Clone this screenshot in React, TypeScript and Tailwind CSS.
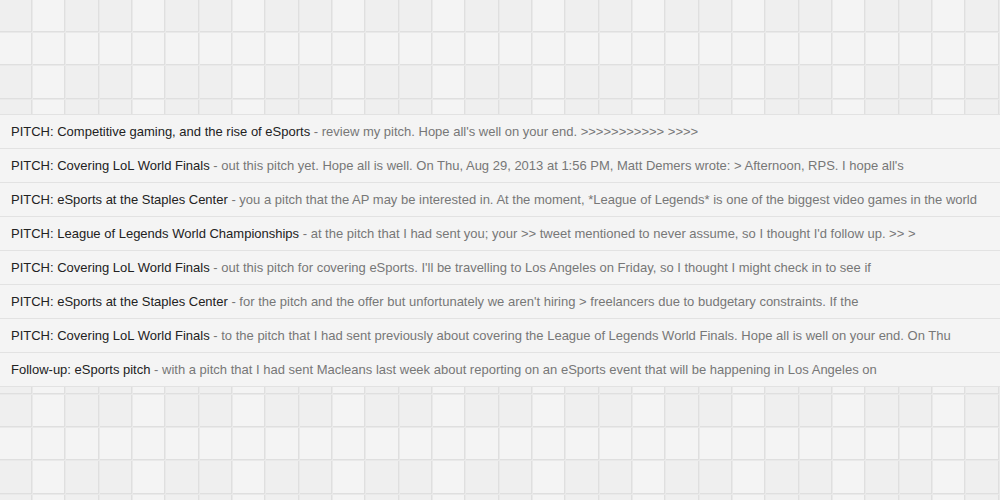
import React from "react";

const rows: [string, string][] = [
  ["PITCH: Competitive gaming, and the rise of eSports", "review my pitch. Hope all's well on your end. >>>>>>>>>>> >>>>"],
  ["PITCH: Covering LoL World Finals", "out this pitch yet. Hope all is well. On Thu, Aug 29, 2013 at 1:56 PM, Matt Demers wrote: > Afternoon, RPS. I hope all's"],
  ["PITCH: eSports at the Staples Center", "you a pitch that the AP may be interested in. At the moment, *League of Legends* is one of the biggest video games in the world"],
  ["PITCH: League of Legends World Championships", "at the pitch that I had sent you; your >> tweet mentioned to never assume, so I thought I'd follow up. >> >"],
  ["PITCH: Covering LoL World Finals", "out this pitch for covering eSports. I'll be travelling to Los Angeles on Friday, so I thought I might check in to see if"],
  ["PITCH: eSports at the Staples Center", "for the pitch and the offer but unfortunately we aren't hiring > freelancers due to budgetary constraints. If the"],
  ["PITCH: Covering LoL World Finals", "to the pitch that I had sent previously about covering the League of Legends World Finals. Hope all is well on your end. On Thu"],
  ["Follow-up: eSports pitch", "with a pitch that I had sent Macleans last week about reporting on an eSports event that will be happening in Los Angeles on"],
];

function Tiles({ id, offsetY }: { id: string; offsetY: number }) {
  const starts = [0, 33, 66];
  const sizes = [31, 31, 32];
  const cells: React.ReactNode[] = [];
  for (let r = 0; r < 3; r++) {
    for (let c = 0; c < 3; c++) {
      const dark = r !== 1 && c !== 1;
      cells.push(
        <rect
          key={`${r}-${c}`}
          x={starts[c]}
          y={starts[r]}
          width={sizes[c]}
          height={sizes[r]}
          fill={dark ? "#efefef" : "#f4f4f4"}
        />
      );
    }
  }
  return (
    <svg className="block w-full h-full" xmlns="http://www.w3.org/2000/svg">
      <defs>
        <pattern id={id} x={0} y={offsetY} width={100} height={100} patternUnits="userSpaceOnUse">
          <rect x={0} y={0} width={100} height={100} fill="#dfdfdf" />
          {[31, 64, 98].map((p) => (
            <React.Fragment key={p}>
              <rect x={p + 1} y={0} width={1} height={100} fill="#e9e9e9" />
              <rect x={0} y={p + 1} width={100} height={1} fill="#e9e9e9" />
            </React.Fragment>
          ))}
          {cells}
        </pattern>
      </defs>
      <rect width="100%" height="100%" fill={`url(#${id})`} />
    </svg>
  );
}

export default function App() {
  return (
    <div className="w-[1000px] h-[500px] flex flex-col overflow-hidden bg-[#f4f4f4] font-['Liberation_Sans',Arial,sans-serif]">
      <div className="h-[114px] shrink-0">
        <Tiles id="tilesTop" offsetY={0} />
      </div>
      <div className="border-t border-[#e2e2e2] bg-[#f4f4f4]">
        {rows.map(([subject, snippet], i) => (
          <div
            key={i}
            className="h-[34px] border-b border-[#e2e2e2] flex items-center px-[11px] whitespace-nowrap overflow-hidden text-[13px]"
          >
            <span className="text-[#222222]">{subject}</span>
            <span className="text-[#777777]">&nbsp;- {snippet}</span>
          </div>
        ))}
      </div>
      <div className="flex-1">
        <Tiles id="tilesBottom" offsetY={8} />
      </div>
    </div>
  );
}
